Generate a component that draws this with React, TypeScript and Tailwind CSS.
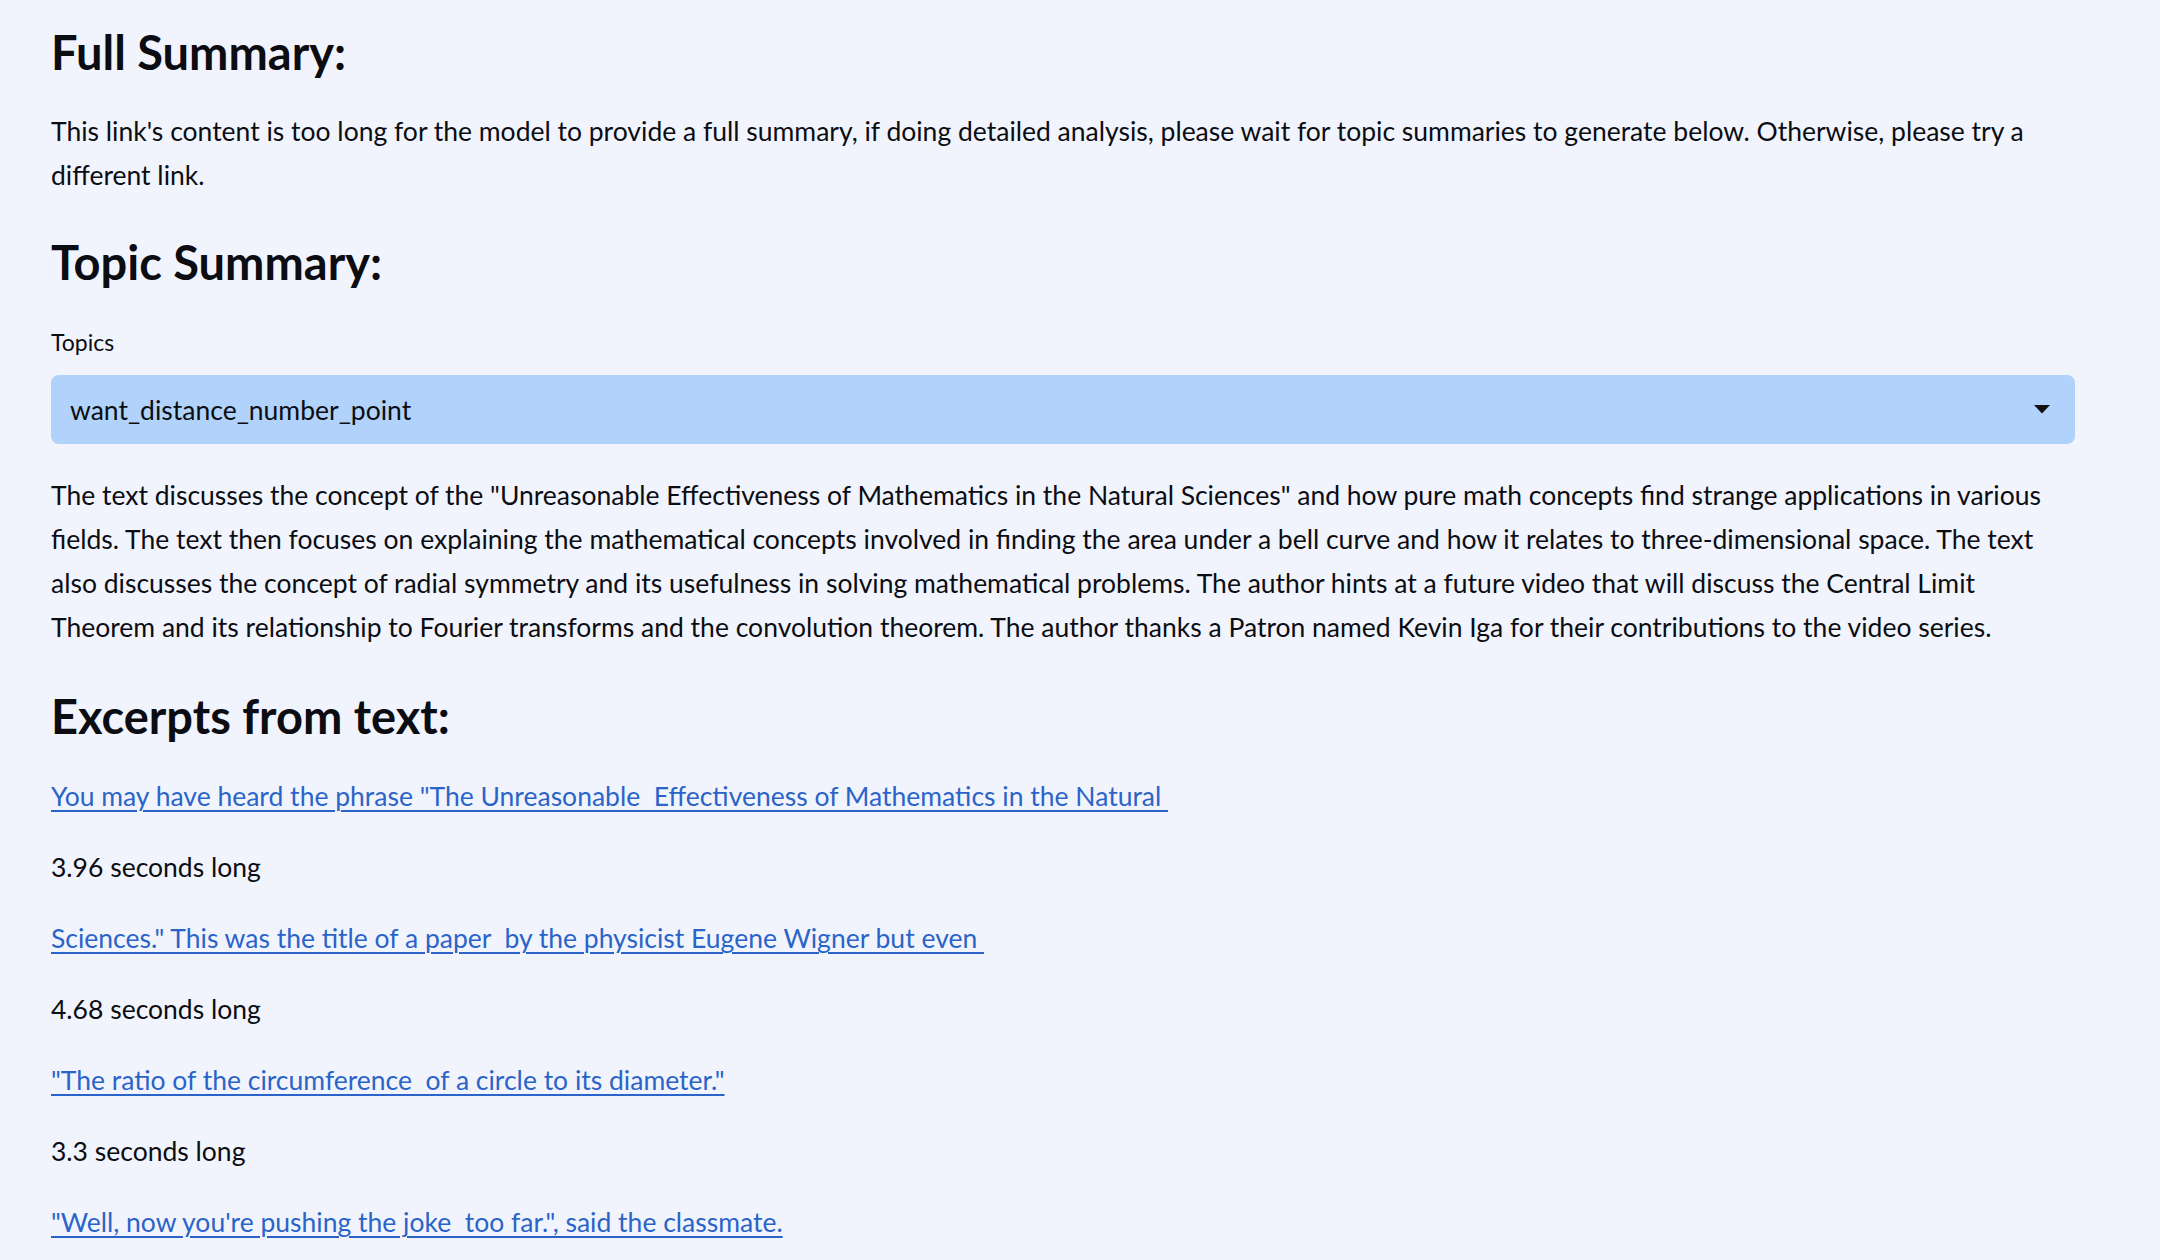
const excerpts = [
  { text: 'You may have heard the phrase "The Unreasonable  Effectiveness of Mathematics in the Natural ', length: "3.96" },
  { text: 'Sciences." This was the title of a paper  by the physicist Eugene Wigner but even ', length: "4.68" },
  { text: '"The ratio of the circumference  of a circle to its diameter."', length: "3.3" },
  { text: '"Well, now you\'re pushing the joke  too far.", said the classmate.', length: null },
];

const Heading = ({ children, className = "" }: { children: React.ReactNode; className?: string }) => (
  <h2 className={`text-[47px] leading-[56px] font-bold text-[#0b0d12] ${className}`}>{children}</h2>
);

const TopicSelect = ({ value }: { value: string }) => (
  <div className="flex h-[69px] w-full items-center justify-between rounded-[8px] bg-[#b1d2fa] pl-[19px] pr-[25px]">
    <span className="text-[26.5px] leading-[44px] text-[#0b0d12]">{value}</span>
    <svg width="16" height="9" viewBox="0 0 16 9">
      <polygon points="0,0 16,0 8,8.5" fill="#111" />
    </svg>
  </div>
);

export default function App() {
  return (
    <div className="min-h-screen bg-[#f1f4fd] font-['Lato',sans-serif] text-[#0b0d12]">
      <div className="flex w-[2075px] flex-col pl-[51px] pt-[24px]">
        <Heading>Full Summary:</Heading>
        <p className="mt-[29px] text-[26.5px] leading-[44px]">
          This link's content is too long for the model to provide a full summary, if doing detailed analysis, please wait for topic summaries to generate below. Otherwise, please try a different link.
        </p>

        <Heading className="mt-[37px]">Topic Summary:</Heading>
        <label className="mt-[35px] text-[23px] leading-[34px]">Topics</label>
        <div className="mt-[16px]">
          <TopicSelect value="want_distance_number_point" />
        </div>
        <p className="mt-[29px] text-[26.5px] leading-[44px]">
          The text discusses the concept of the "Unreasonable Effectiveness of Mathematics in the Natural Sciences" and how pure math concepts find strange applications in various fields. The text then focuses on explaining the mathematical concepts involved in finding the area under a bell curve and how it relates to three-dimensional space. The text also discusses the concept of radial symmetry and its usefulness in solving mathematical problems. The author hints at a future video that will discuss the Central Limit Theorem and its relationship to Fourier transforms and the convolution theorem. The author thanks a Patron named Kevin Iga for their contributions to the video series.
        </p>

        <Heading className="mt-[39px]">Excerpts from text:</Heading>
        <div className="mt-[30px] flex flex-col gap-[27px] pb-[40px]">
          {excerpts.map((e) => (
            <div key={e.text} className="flex flex-col gap-[27px]">
              <a href="#" className="w-fit whitespace-pre-wrap text-[26.5px] leading-[44px] text-[#2b64c8] underline decoration-[2px] underline-offset-[4px]">
                {e.text}
              </a>
              {e.length && <p className="text-[26.5px] leading-[44px]">{e.length} seconds long</p>}
            </div>
          ))}
        </div>
      </div>
    </div>
  );
}
